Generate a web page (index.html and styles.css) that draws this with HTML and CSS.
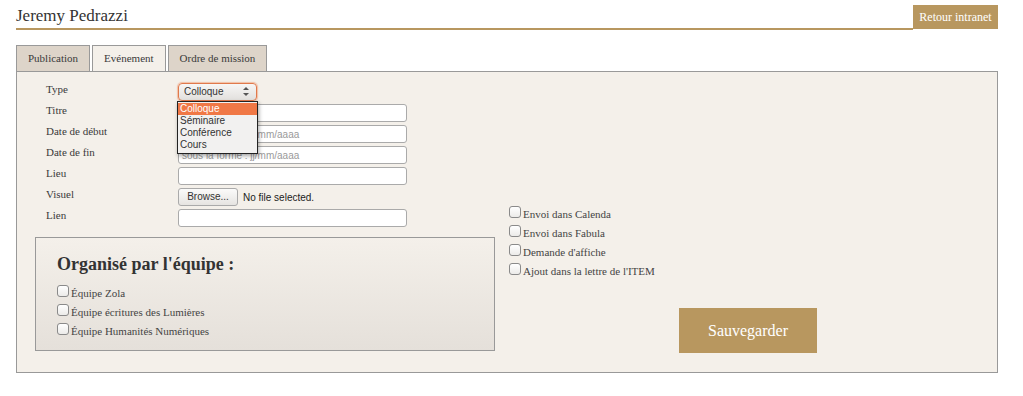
FILE: index.html
```html
<!DOCTYPE html>
<html>
<head>
  <meta charset="UTF-8">
  <title>Intranet - Evénement</title>
  <link rel="stylesheet" href="styles.css">
</head>
<body>
<div class="page">
  <div class="header">
    <h1>Jeremy Pedrazzi</h1>
    <a class="back-btn" href="#">Retour intranet</a>
  </div>

  <div class="tabs">
    <div class="tab">Publication</div>
    <div class="tab active">Evénement</div>
    <div class="tab">Ordre de mission</div>
  </div>

  <div class="panel">
    <div class="left-col">
      <div class="fields">
        <label class="field-label">Type</label>
        <div class="select-wrap">
          <div class="select">Colloque<span class="spin"><i class="up"></i><i class="down"></i></span></div>
          <ul class="options">
            <li class="selected">Colloque</li>
            <li>Séminaire</li>
            <li>Conférence</li>
            <li>Cours</li>
          </ul>
        </div>

        <label class="field-label">Titre</label>
        <input class="text-input" type="text">

        <label class="field-label">Date de début</label>
        <input class="text-input" type="text" placeholder="sous la forme : jj/mm/aaaa">

        <label class="field-label">Date de fin</label>
        <input class="text-input" type="text" placeholder="sous la forme : jj/mm/aaaa">

        <label class="field-label">Lieu</label>
        <input class="text-input" type="text">

        <label class="field-label">Visuel</label>
        <div class="file-row"><span class="browse">Browse...</span><span class="no-file">No file selected.</span></div>

        <label class="field-label">Lien</label>
        <input class="text-input" type="text">
      </div>

      <div class="team-box">
        <h2>Organisé par l'équipe :</h2>
        <label class="check"><input type="checkbox"> Équipe Zola</label>
        <label class="check"><input type="checkbox"> Équipe écritures des Lumières</label>
        <label class="check"><input type="checkbox"> Équipe Humanités Numériques</label>
      </div>
    </div>

    <div class="right-col">
      <label class="check"><input type="checkbox"> Envoi dans Calenda</label>
      <label class="check"><input type="checkbox"> Envoi dans Fabula</label>
      <label class="check"><input type="checkbox"> Demande d'affiche</label>
      <label class="check"><input type="checkbox"> Ajout dans la lettre de l'ITEM</label>
      <button class="save-btn" type="submit">Sauvegarder</button>
    </div>
  </div>
</div>
</body>
</html>
```

FILE: styles.css
```css
body {
  margin: 0;
  background-color: #fff;
  color: #3a3a3a;
  font-family: "Liberation Serif", serif;
}

.page {
  width: 982px;
  margin-left: 16px;
}

.header {
  display: flex;
  align-items: flex-start;
  margin-top: 5px;
}

.header h1 {
  flex: 1;
  margin: 0;
  height: 23px;
  font-size: 17px;
  font-weight: normal;
  line-height: 22px;
  color: #333;
  border-bottom: 2px solid #b8975f;
}

.back-btn {
  display: block;
  width: 85px;
  height: 24px;
  line-height: 24px;
  text-align: center;
  background-color: #b8975f;
  color: #fff;
  font-size: 12px;
  text-decoration: none;
}

.tabs {
  display: flex;
  gap: 2px;
  margin-top: 15px;
}

.tab {
  height: 25px;
  line-height: 24px;
  padding: 0 11px;
  border: 1px solid #999;
  border-bottom: none;
  background-color: #ddd4c9;
  font-size: 11px;
  color: #3a3a3a;
}

.tab.active {
  background-color: #f4f0ea;
}

.panel {
  display: flex;
  gap: 14px;
  border: 1px solid #999;
  background-color: #f4f0ea;
  padding: 11px 0 19px 18px;
}

.left-col {
  width: 460px;
}

.fields {
  display: grid;
  grid-template-columns: 132px 229px;
  row-gap: 3px;
  padding-left: 11px;
}

.field-label {
  font-size: 11px;
  line-height: 13px;
  height: 18px;
}

.text-input {
  box-sizing: border-box;
  width: 229px;
  height: 18px;
  margin: 0;
  padding: 0 3px;
  border: 1px solid #aaa;
  border-radius: 3px;
  background: #fff;
  font-family: "Liberation Sans", sans-serif;
  font-size: 10px;
}

.text-input::placeholder {
  color: #9a9a9a;
}

.select-wrap {
  position: relative;
  height: 18px;
}

.select {
  box-sizing: border-box;
  width: 79px;
  height: 18px;
  padding-left: 5px;
  border: 1px solid #e0794c;
  border-radius: 4px;
  box-shadow: 0 0 1px 1px rgba(240, 130, 80, 0.45);
  background: linear-gradient(#f7f6f5, #e2e0dd);
  font-family: "Liberation Sans", sans-serif;
  font-size: 10px;
  line-height: 16px;
  color: #333;
  position: relative;
}

.spin {
  position: absolute;
  right: 7px;
  top: 3px;
}

.spin i {
  display: block;
  width: 0;
  height: 0;
  border-left: 3px solid transparent;
  border-right: 3px solid transparent;
}

.spin .up {
  border-bottom: 3px solid #555;
  margin-bottom: 3px;
}

.spin .down {
  border-top: 3px solid #555;
}

.options {
  position: absolute;
  left: -1px;
  top: 18px;
  width: 79px;
  margin: 0;
  padding: 1px 0 2px;
  list-style: none;
  background-color: #f2f1f0;
  border: 1px solid #222;
  box-shadow: 1px 2px 4px rgba(0, 0, 0, 0.35);
  font-family: "Liberation Sans", sans-serif;
  font-size: 10px;
  z-index: 2;
}

.options li {
  height: 12px;
  line-height: 12px;
  padding-left: 2px;
  color: #333;
}

.options li.selected {
  background-color: #f07846;
  color: #fff;
}

.file-row {
  display: flex;
  align-items: center;
  height: 18px;
  font-family: "Liberation Sans", sans-serif;
  font-size: 10px;
}

.browse {
  box-sizing: border-box;
  width: 60px;
  height: 18px;
  line-height: 16px;
  text-align: center;
  border: 1px solid #aaa;
  border-radius: 3px;
  background: linear-gradient(#fbfbfa, #e6e4e1);
  color: #333;
}

.no-file {
  margin-left: 5px;
  color: #222;
}

.team-box {
  margin-top: 10px;
  padding: 14px 20px 8px 21px;
  border: 1px solid #999;
  background: linear-gradient(#f4f0ea, #e5e0da);
}

.team-box h2 {
  margin: 0 0 9px;
  font-size: 18px;
  line-height: 24px;
  font-weight: bold;
  color: #333;
}

.check {
  display: flex;
  align-items: flex-start;
  height: 19px;
  font-size: 11px;
  line-height: 17px;
  color: #444;
}

.check input {
  appearance: none;
  -webkit-appearance: none;
  box-sizing: border-box;
  width: 12px;
  height: 12px;
  margin: 0 2px 0 0;
  border: 1px solid #8a8a8a;
  border-radius: 3px;
  background: linear-gradient(#fff, #ecebe9);
}

.right-col {
  padding-top: 123px;
}

.save-btn {
  display: block;
  width: 138px;
  height: 45px;
  margin: 26px 0 0 170px;
  border: none;
  background-color: #b8975f;
  color: #fff;
  font-family: "Liberation Serif", serif;
  font-size: 16px;
  cursor: pointer;
}
```
